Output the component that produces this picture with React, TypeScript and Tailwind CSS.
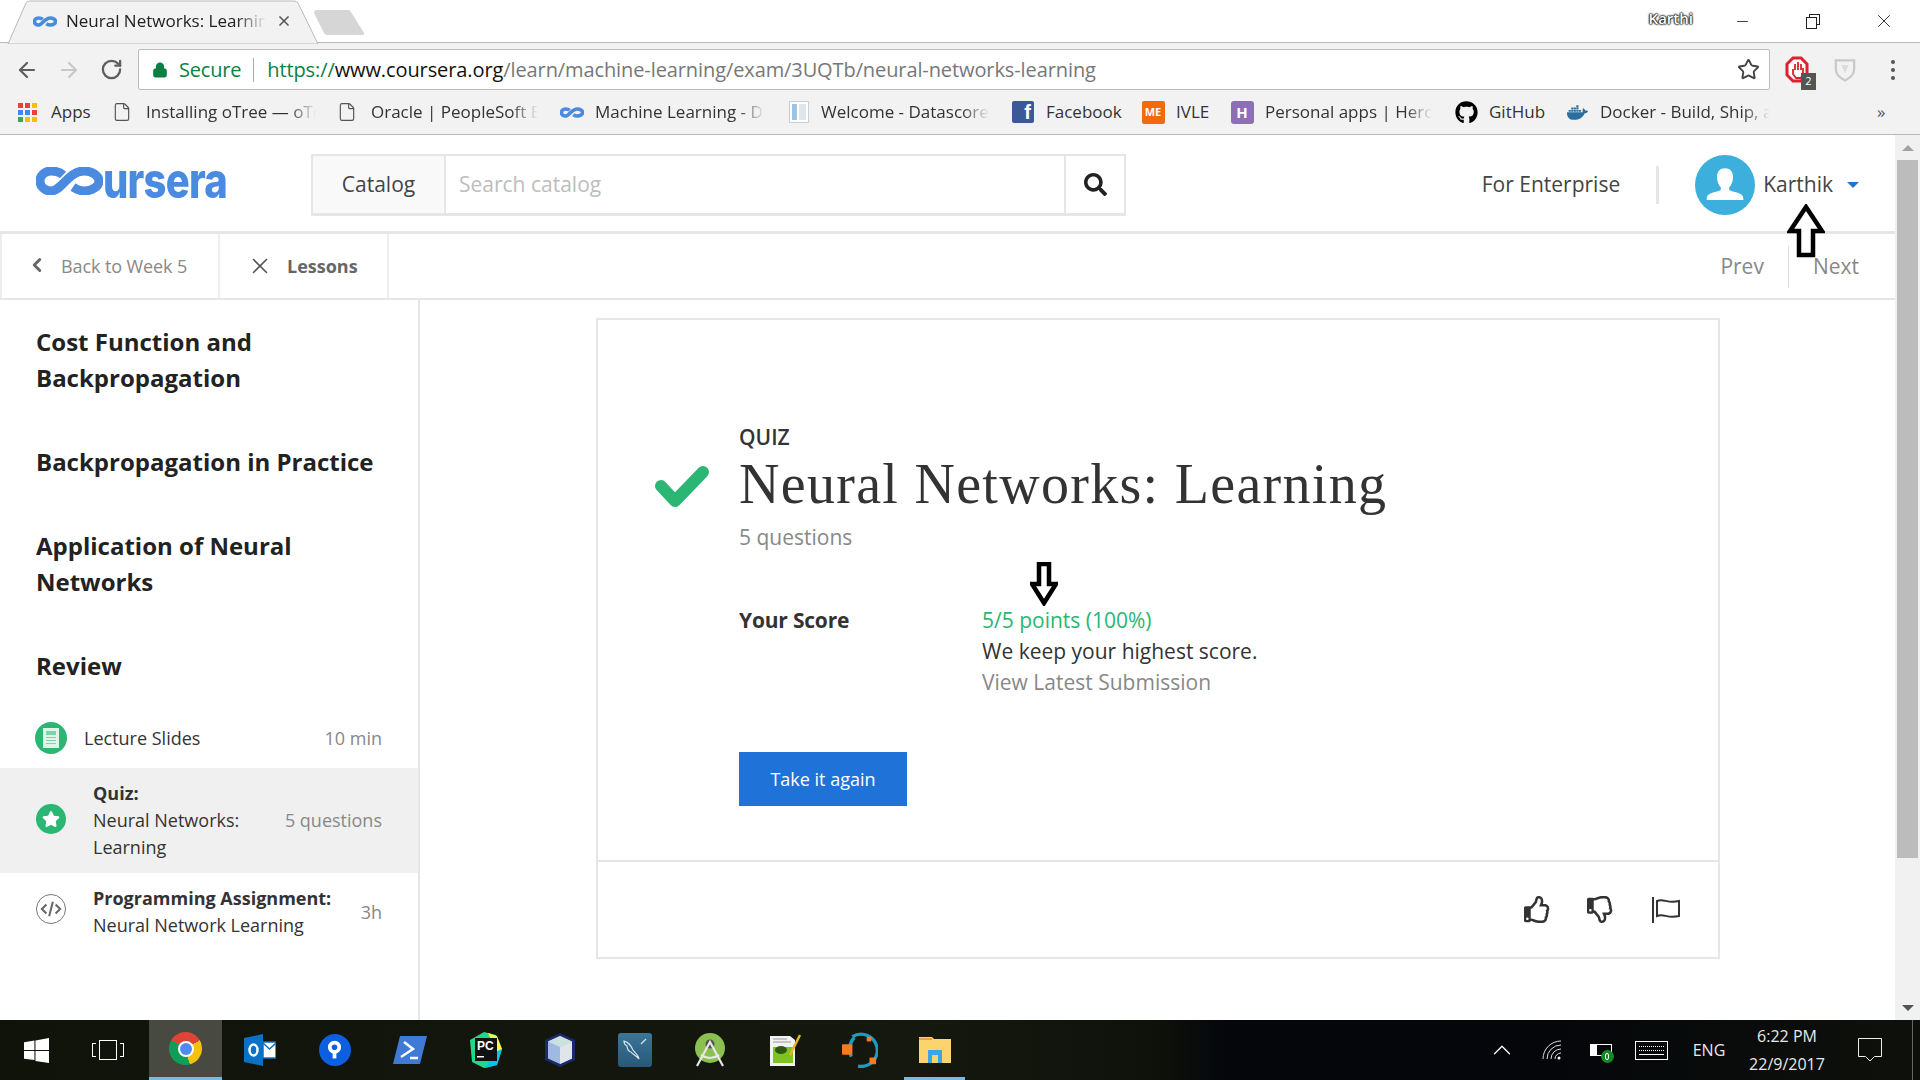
import type { ReactNode } from "react";
import { ArrowLeft, ArrowRight, ChevronLeft, ChevronUp, File, Lock, Minus, RotateCw, Star, X } from "lucide-react";
import { FaDocker, FaGithub, FaRegThumbsDown, FaRegThumbsUp, FaSearch, FaStar } from "react-icons/fa";

function Infinity8({ className, stroke = 9 }: { className: string; stroke?: number }) {
  return (
    <svg viewBox="0 0 67 28" className={className} fill="none" stroke="#4a8ae0" strokeWidth={stroke}>
      <path d="M27 8C24 5 20 4 15 4 8.500 4 4 8.500 4 14s4.500 10 11 10C26 24 32 4 48 4c8 0 15 4.500 15 10s-7 10-15 10c-5 0-8-2-11-4" />
    </svg>
  );
}

function Bookmark({ w, icon, label, fade = true, gap = "gap-[11px]" }: { w: string; icon: ReactNode; label: string; fade?: boolean; gap?: string }) {
  return (
    <div className={`flex items-center ${gap} ${w}`}>
      <div className="flex h-[24px] w-[24px] shrink-0 items-center justify-center">{icon}</div>
      <span
        className={`overflow-hidden whitespace-nowrap text-[17px] text-[#333] ${
          fade ? "mr-[22px] min-w-0 flex-1 [mask-image:linear-gradient(to_right,black_84%,transparent_100%)]" : ""
        }`}
      >
        {label}
      </span>
    </div>
  );
}

function AppsGrid() {
  const colors = ["#ea4335", "#ea4335", "#fbbc05", "#4285f4", "#4285f4", "#ea4335", "#34a853", "#fbbc05", "#fbbc05"];
  return (
    <div className="grid grid-cols-3 gap-[2px]">
      {colors.map((c, i) => (
        <div key={i} className="h-[5px] w-[5px]" style={{ backgroundColor: c }} />
      ))}
    </div>
  );
}

function BrowserChrome() {
  return (
    <div className="flex h-[135px] shrink-0 flex-col border-b border-[#b9b9b9] bg-[#f2f2f2]">
      <div className="relative flex h-[43px] items-center border-b border-[#b9b9b9] bg-white">
        <svg className="absolute left-0 top-0 h-[44px] w-[380px]" viewBox="0 0 380 44">
          <path d="M8 44 L26 3 Q27 1 30 1 L294 1 Q297 1 298 3 L318 44 Z" fill="#f2f2f2" stroke="#b9b9b9" />
          <path d="M314 13 Q314 10 317 10 L348 10 Q350 10 351 12 L364 33 Q365 35 362 35 L327 35 Q325 35 324 33 Z" fill="#d6d6d6" />
        </svg>
        <div className="relative ml-[33px] flex items-center">
          <Infinity8 className="h-[13px] w-[24px]" stroke={10} />
          <span className="ml-[9px] w-[200px] overflow-hidden whitespace-nowrap text-[17px] text-[#222] [mask-image:linear-gradient(to_right,black_85%,transparent)]">
            Neural Networks: Learning
          </span>
          <X size={16} strokeWidth={2.5} className="ml-[10px] text-[#555]" />
        </div>
        <div className="relative ml-auto flex items-center">
          <span className="mb-[5px] mr-[41px] text-[15px] font-semibold text-white [text-shadow:0_0_2px_#111,0_0_2px_#111,0_0_2px_#111,0_0_1px_#111]">Karthi</span>
          <Minus size={17} strokeWidth={1.2} className="mr-[55px] text-[#222]" />
          <div className="relative mr-[53px] h-[15px] w-[14px]">
            <div className="absolute right-0 top-0 h-[11px] w-[11px] border border-[#222]" />
            <div className="absolute bottom-0 left-0 h-[12px] w-[11px] border border-[#222] bg-white" />
          </div>
          <X size={22} strokeWidth={1} className="mr-[25px] text-[#222]" />
        </div>
      </div>

      <div className="flex h-[49px] items-start pt-[6px]">
        <div className="ml-[6px] flex">
          <div className="flex h-[41px] w-[42px] items-center justify-center text-[#5f5f5f]"><ArrowLeft size={24} strokeWidth={2.2} /></div>
          <div className="flex h-[41px] w-[42px] items-center justify-center text-[#c8c8c8]"><ArrowRight size={24} strokeWidth={2.2} /></div>
          <div className="flex h-[41px] w-[42px] items-center justify-center text-[#5f5f5f]"><RotateCw size={23} strokeWidth={2.4} /></div>
        </div>
        <div className="ml-[6px] flex h-[41px] w-[1632px] items-center rounded-[2px] border border-[#bdbdbd] bg-white pl-[13px] pr-[9px] text-[20px]">
          <Lock size={16} strokeWidth={2.5} className="fill-[#0b8043] text-[#0b8043]" />
          <span className="ml-[11px] tracking-[-0.2px] text-[#0b8043]">Secure</span>
          <div className="ml-[12px] h-[24px] w-px bg-[#aaa]" />
          <span className="ml-[13px] whitespace-nowrap tracking-[-0.1px] text-[#777]">
            <span className="text-[#0b8043]">https://</span>
            <span className="text-[#111]">www.coursera.org</span>
            /learn/machine-learning/exam/3UQTb/neural-networks-learning
          </span>
          <Star size={23} strokeWidth={2} className="ml-auto text-[#444]" />
        </div>
        <div className="ml-[3px] flex">
          <div className="relative flex h-[41px] w-[48px] items-center justify-center">
            <svg viewBox="0 0 24 28" className="h-[28px] w-[24px]">
              <path d="M8 2h8l6 6v11l-6 6H8l-6-6V8z" fill="#fff" stroke="#e0202c" strokeWidth="3" />
              <path d="M8 13v5l3 4h5l2-5v-5M10 14V8m3 6V6m3 8V8" fill="none" stroke="#e0202c" strokeWidth="1.800" />
            </svg>
            <span className="absolute left-[28px] top-[24px] flex h-[17px] w-[15px] items-center justify-center bg-[#555] text-[11px] text-white">2</span>
          </div>
          <div className="flex h-[41px] w-[48px] items-center justify-center">
            <svg viewBox="0 0 24 28" className="h-[27px] w-[22px]" fill="none" stroke="#c9c9c9" strokeWidth="2.500">
              <path d="M2 4h20v10c0 6-5 9-10 12C7 23 2 20 2 14z" />
              <path d="M8 9h8l-4 9z" fill="#dcdcdc" stroke="none" />
            </svg>
          </div>
          <div className="flex h-[41px] w-[48px] flex-col items-center justify-center gap-[4px]">
            <div className="h-[4px] w-[4px] rounded-full bg-[#555]" />
            <div className="h-[4px] w-[4px] rounded-full bg-[#555]" />
            <div className="h-[4px] w-[4px] rounded-full bg-[#555]" />
          </div>
        </div>
      </div>

      <div className="flex flex-1 items-center pb-[2px] pl-[15px]">
        <Bookmark w="w-[98px]" gap="gap-[12px]" icon={<AppsGrid />} label="Apps" fade={false} />
        <Bookmark w="w-[225px]" gap="gap-[9px]" icon={<File size={20} strokeWidth={1.4} className="-translate-x-[3px] text-[#555]" />} label="Installing oTree — oTree" />
        <Bookmark w="w-[222px]" gap="gap-[9px]" icon={<File size={20} strokeWidth={1.4} className="-translate-x-[3px] text-[#555]" />} label="Oracle | PeopleSoft Enterprise" />
        <Bookmark w="w-[227px]" icon={<Infinity8 className="h-[13px] w-[24px]" stroke={10} />} label="Machine Learning - Deep" />
        <Bookmark
          w="w-[224px]"
          gap="gap-[10px]"
          icon={
            <div className="flex h-[22px] w-[20px] gap-[2px] border border-[#c5d2de] bg-white p-[2px]">
              <div className="w-[5px] bg-[#9fc3e2]" />
              <div className="flex-1 bg-[#dfe6ec]" />
            </div>
          }
          label="Welcome - Datascore Hub"
        />
        <Bookmark
          w="w-[130px]"
          icon={<div className="flex h-[22px] w-[22px] items-end justify-end rounded-[2px] bg-[#3b5998] pr-[3px] font-['Liberation_Sans',sans-serif] text-[20px] font-bold leading-[22px] text-white">f</div>}
          label="Facebook"
          fade={false}
        />
        <Bookmark
          w="w-[89px]"
          icon={<div className="flex h-[23px] w-[23px] items-center justify-center rounded-[2px] bg-[#f26a0f] text-[11px] font-bold text-white">ME</div>}
          label="IVLE"
          fade={false}
        />
        <Bookmark
          w="w-[224px]"
          icon={<div className="flex h-[23px] w-[23px] items-center justify-center rounded-[3px] bg-[#8c6fb5] text-[15px] font-bold text-white">H</div>}
          label="Personal apps | Heroku"
        />
        <Bookmark w="w-[111px]" icon={<FaGithub size={23} className="text-black" />} label="GitHub" fade={false} />
        <Bookmark w="w-[227px]" icon={<FaDocker size={21} className="text-[#2a6f9f]" />} label="Docker - Build, Ship, and Run" />
        <span className="ml-[85px] text-[17px] text-[#555]">»</span>
      </div>
    </div>
  );
}

function TopNav() {
  return (
    <div className="flex h-[99px] shrink-0 items-center border-b-[3px] border-[#e6e6e6] bg-white pt-[4px]">
      <div className="flex w-[311px] shrink-0 items-center pb-[8px] pl-[36px]">
        <Infinity8 className="h-[28px] w-[67px]" />
        <span className="inline-block origin-center scale-y-[1.22] font-['Inter',sans-serif] text-[40px] font-extrabold leading-none tracking-[-0.8px] text-[#4a8ae0]">
          ursera
        </span>
      </div>
      <div className="flex h-[62px] w-[815px] border-2 border-b-[3px] border-[#e6e6e6]">
        <div className="flex w-[133px] items-center justify-center border-r-2 border-[#e6e6e6] bg-[#f9f9f9] text-[21px] text-[#444]">Catalog</div>
        <div className="flex flex-1 items-center pl-[13px] text-[21px] text-[#bdbdbd]">Search catalog</div>
        <div className="flex w-[60px] items-center justify-center border-l-2 border-[#e6e6e6] text-[#222]">
          <FaSearch size={23} />
        </div>
      </div>
      <div className="ml-auto flex items-center pr-[36px]">
        <span className="text-[21px] text-[#444]">For Enterprise</span>
        <div className="mx-[36px] h-[38px] w-[3px] bg-[#e6e6e6]" />
        <div className="flex h-[60px] w-[60px] items-end justify-center overflow-hidden rounded-full bg-[#3cafdc]">
          <svg viewBox="0 0 36 36" className="h-[60px] w-[60px]" fill="#fff">
            <path d="M18 8c-3 0-4.800 2-4.800 5 0 3 1 5 2.300 6.500v1.500c-1.500 1-7 1.500-8 3.500-.6 1.300-.5 2-.5 2.500h22c0-.5.100-1.200-.5-2.500-1-2-6.500-2.500-8-3.500v-1.500c1.300-1.500 2.300-3.500 2.300-6.500 0-3-1.800-5-4.800-5z" />
          </svg>
        </div>
        <span className="ml-[8px] text-[21px] text-[#444]">Karthik</span>
        <div className="ml-[14px] h-0 w-0 border-x-[6px] border-t-[6px] border-x-transparent border-t-[#2a73cc]" />
      </div>
    </div>
  );
}

function SubNav() {
  return (
    <div className="flex h-[66px] shrink-0 items-stretch border-b-2 border-[#e6e6e6] bg-white">
      <div className="flex w-[220px] items-center border-x-2 border-[#eee] pl-[24px] text-[18px] text-[#888]">
        <ChevronLeft size={22} strokeWidth={3.2} className="-translate-y-[1px] text-[#666]" />
        <span className="ml-[13px] tracking-[-0.1px]">Back to Week 5</span>
      </div>
      <div className="flex w-[169px] items-center border-r-2 border-[#eee] pl-[27px]">
        <X size={26} strokeWidth={1.5} className="text-[#555]" />
        <span className="ml-[14px] text-[18px] font-bold text-[#666]">Lessons</span>
      </div>
      <div className="ml-auto flex items-center pr-[36px] pt-[1px] text-[21px] text-[#888]">
        <span>Prev</span>
        <div className="mx-[24px] h-[42px] w-px bg-[#ddd]" />
        <span>Next</span>
      </div>
    </div>
  );
}

function Sidebar() {
  return (
    <div className="flex w-[420px] shrink-0 flex-col border-r-2 border-[#e6e6e6] bg-white pt-[24px]">
      <div className="flex flex-col gap-[48px] px-[36px] text-[24px] font-bold leading-[36px] text-[#222]">
        <div>Cost Function and<br />Backpropagation</div>
        <div>Backpropagation in Practice</div>
        <div>Application of Neural<br />Networks</div>
        <div>Review</div>
      </div>
      <div className="mt-[24px] flex h-[60px] items-center pl-[35px] pr-[36px] text-[18px] text-[#333]">
        <div className="flex h-[32px] w-[32px] items-center justify-center rounded-full bg-[#2bb673]">
          <div className="flex h-[20px] w-[16px] flex-col gap-[2px] bg-[#dff5e9] p-[3px]">
            <div className="h-[4px] bg-[#7fd3a8]" />
            <div className="h-[1px] bg-[#7fd3a8]" />
            <div className="h-[1px] bg-[#7fd3a8]" />
            <div className="h-[1px] bg-[#7fd3a8]" />
          </div>
        </div>
        <span className="ml-[17px]">Lecture Slides</span>
        <span className="ml-auto text-[#888]">10 min</span>
      </div>
      <div className="flex h-[105px] items-center bg-[#f0f0f0] pl-[36px] pr-[36px] text-[18px] leading-[27px] text-[#333]">
        <div className="mb-[4px] flex h-[30px] w-[30px] shrink-0 items-center justify-center rounded-full bg-[#2bb673] text-white">
          <FaStar size={18} />
        </div>
        <div className="ml-[27px] w-[170px]">
          <div className="font-bold">Quiz:</div>
          <div>Neural Networks: Learning</div>
        </div>
        <span className="ml-auto whitespace-nowrap text-[#888]">5 questions</span>
      </div>
      <div className="flex items-center pl-[36px] pr-[36px] pt-[12px] text-[18px] leading-[27px] text-[#333]">
        <div className="mb-[6px] flex h-[30px] w-[30px] shrink-0 items-center justify-center rounded-full border border-[#777]">
          <svg viewBox="0 0 24 24" className="h-[22px] w-[22px]" fill="none" stroke="#666" strokeWidth="2.200">
            <path d="M7 7l-5 5 5 5M17 7l5 5-5 5M14 4l-4 16" />
          </svg>
        </div>
        <div className="ml-[27px]">
          <div className="whitespace-nowrap font-bold">Programming Assignment:</div>
          <div className="whitespace-nowrap">Neural Network Learning</div>
        </div>
        <span className="ml-auto text-[#888]">3h</span>
      </div>
    </div>
  );
}

function QuizCard() {
  return (
    <div className="ml-[176px] mt-[18px] flex h-[641px] w-[1124px] flex-col border-2 border-[#e6e6e6]">
      <div className="flex h-[542px] border-b-2 border-[#e6e6e6] pl-[56px] pt-[103px]">
        <div className="w-[85px] shrink-0 pt-[42px]">
          <svg viewBox="0 0 56 44" className="h-[44px] w-[56px]" fill="none" stroke="#2bb673" strokeWidth="12" strokeLinejoin="round" strokeLinecap="round">
            <path d="M7 21l14 15L49 7" />
          </svg>
        </div>
        <div className="flex flex-col">
          <div className="text-[21px] font-semibold leading-[28px] text-[#333]">QUIZ</div>
          <div className="mt-[1px] whitespace-nowrap font-['Liberation_Serif',serif] text-[56px] leading-[64px] tracking-[1.300px] text-[#333]">Neural Networks: Learning</div>
          <div className="mt-[7px] text-[21px] leading-[28px] text-[#888]">5 questions</div>
          <div className="mt-[54px] flex text-[21px] leading-[31px]">
            <div className="w-[243px] font-bold tracking-[-0.2px] text-[#333]">Your Score</div>
            <div>
              <div className="text-[#2bb673]">5/5 points (100%)</div>
              <div className="text-[#333]">We keep your highest score.</div>
              <div className="text-[#888]">View Latest Submission</div>
            </div>
          </div>
          <button className="mt-[54px] flex h-[54px] w-[168px] items-center justify-center bg-[#1f72d8] text-[18px] text-white">Take it again</button>
        </div>
      </div>
      <div className="flex flex-1 items-center justify-end pr-[37px] text-[#333]">
        <FaRegThumbsUp size={27} />
        <FaRegThumbsDown size={27} className="ml-[36px]" />
        <svg viewBox="0 0 30 26" className="ml-[37px] h-[26px] w-[30px]" fill="none" stroke="#333" strokeWidth="2">
          <path d="M2 0v26" />
          <path d="M6 4c7-3 10 3 22 0v15c-12 3-15-3-22 0z" />
        </svg>
      </div>
    </div>
  );
}

function Scrollbar() {
  return (
    <div className="flex w-[25px] shrink-0 flex-col items-center bg-[#f1f1f1]">
      <div className="mt-[10px] h-0 w-0 border-x-[6px] border-b-[6px] border-x-transparent border-b-[#a3a3a3]" />
      <div className="mt-[9px] h-[698px] w-[21px] bg-[#bcbcbc]" />
      <div className="mt-auto mb-[9px] h-0 w-0 border-x-[6px] border-t-[6px] border-x-transparent border-t-[#555]" />
    </div>
  );
}

function TaskCell({ className = "w-[75px]", children }: { className?: string; children: ReactNode }) {
  return <div className={`flex h-full items-center justify-center ${className}`}>{children}</div>;
}

function Taskbar() {
  return (
    <div className="flex h-[60px] shrink-0 bg-[linear-gradient(to_right,#0f130a_0%,#14180e_48%,#0f120a_60%,#04060c_64%,#04060a_80%,#0e110b_100%)] text-white">
      <TaskCell className="w-[72px]">
        <svg viewBox="0 0 24 24" className="h-[25px] w-[25px]" fill="#fff">
          <path d="M0 4l10-1.500v9H0zM11 2.300L24 0v11.500H11zM0 12.500h10V21L0 19.800zM11 12.500h13V24l-13-2z" />
        </svg>
      </TaskCell>
      <TaskCell className="w-[77px] pr-[5px]">
        <div className="flex items-center gap-[3px]">
          <div className="h-[14px] w-[4px] border-y border-l border-white" />
          <div className="h-[20px] w-[18px] border border-white" />
          <div className="h-[14px] w-[4px] border-y border-r border-white" />
        </div>
      </TaskCell>
      <div className="flex h-full w-[73px] items-center justify-center border-b-[3px] border-[#76b9ed] bg-[#484a42]">
        <div className="flex h-[33px] w-[33px] items-center justify-center rounded-full bg-[conic-gradient(from_300deg,#db4437_0_120deg,#f4c20d_120deg_225deg,#0f9d58_225deg_360deg)]">
          <div className="flex h-[16px] w-[16px] items-center justify-center rounded-full bg-white">
            <div className="h-[12px] w-[12px] rounded-full bg-[#4c8bf5]" />
          </div>
        </div>
      </div>
      <TaskCell>
        <svg viewBox="0 0 32 32" className="h-[32px] w-[32px]">
          <path d="M19 0v32L0 28V4z" fill="#0a72c6" />
          <rect x="19" y="8" width="13" height="16" fill="#fff" stroke="#0a72c6" strokeWidth="1.500" />
          <path d="M19 9l6.500 6L32 9" fill="none" stroke="#0a72c6" strokeWidth="1.500" />
          <ellipse cx="9.500" cy="16" rx="4" ry="5.500" fill="none" stroke="#fff" strokeWidth="2.500" />
        </svg>
      </TaskCell>
      <TaskCell>
        <div className="flex h-[32px] w-[32px] items-center justify-center rounded-full bg-[#0b5fe0]">
          <svg viewBox="0 0 16 20" className="h-[20px] w-[15px]" fill="none" stroke="#fff" strokeWidth="4">
            <circle cx="8" cy="7" r="5" />
            <path d="M8 12v7" />
          </svg>
        </div>
      </TaskCell>
      <TaskCell>
        <svg viewBox="0 0 34 28" className="h-[28px] w-[34px]">
          <path d="M7 0h27l-7 28H0z" fill="#3f7ad6" />
          <path d="M11 6l9 7-12 8M17 22h8" fill="none" stroke="#fff" strokeWidth="2.500" />
        </svg>
      </TaskCell>
      <TaskCell>
        <svg viewBox="0 0 34 36" className="h-[36px] w-[34px]">
          <path d="M2 8L16 0l12 3 6 14-5 16-13 3-12-6z" fill="#21d789" />
          <path d="M20 1l9 3 5 13-4 6z" fill="#fcf84a" />
          <path d="M27 20l7-3-5 16-12 3z" fill="#07c3f2" />
          <rect x="7" y="6" width="22" height="23" fill="#111" />
          <text x="9" y="18" fontSize="12" fontWeight="700" fill="#fff" fontFamily="Liberation Sans">PC</text>
          <rect x="9" y="24" width="7" height="1.500" fill="#fff" />
        </svg>
      </TaskCell>
      <TaskCell>
        <svg viewBox="0 0 34 36" className="h-[36px] w-[34px]">
          <path d="M17 1l15 7v20l-15 7-15-7V8z" fill="#1c2a6b" />
          <path d="M17 4L29 9.500v17L17 32 5 26.500v-17z" fill="#9fb9e0" />
          <path d="M5 9.500L17 4l12 5.500L17 15z" fill="#c9e2e0" />
          <path d="M17 15l12-5.500v17L17 32z" fill="#dfe5ea" />
        </svg>
      </TaskCell>
      <TaskCell>
        <div className="flex h-[34px] w-[34px] items-center justify-center rounded-[3px] bg-[linear-gradient(#3b7699,#28587a)]">
          <svg viewBox="0 0 28 28" className="h-[28px] w-[28px]" fill="none" stroke="#dbe6ee" strokeWidth="1.200">
            <path d="M3 5c5 1 7 5 9 9 2 3 5 4 6 9-3-4-6-4-8-7-2 0-4-3-4-6-2-1-3-3-3-5zM20 8l5-5" />
          </svg>
        </div>
      </TaskCell>
      <TaskCell>
        <svg viewBox="0 0 32 34" className="h-[34px] w-[32px]">
          <circle cx="16" cy="15" r="15" fill="#8cc152" />
          <circle cx="16" cy="11" r="4.500" fill="#555" />
          <path d="M3 33L16 9l13 24M7 22q9 6 18 0" fill="none" stroke="#e8e8e8" strokeWidth="2.200" />
        </svg>
      </TaskCell>
      <TaskCell>
        <svg viewBox="0 0 34 34" className="h-[34px] w-[34px]">
          <path d="M2 3h20l5 4v26H2z" fill="#f2f2f2" />
          <rect x="5" y="14" width="20" height="16" fill="#7ec41f" />
          <ellipse cx="13" cy="17" rx="6" ry="4" fill="#2c5a12" />
          <path d="M5 6h14M5 9h18" stroke="#999" strokeWidth="1" />
          <path d="M22 22L32 2" stroke="#e8b32a" strokeWidth="2.500" />
        </svg>
      </TaskCell>
      <TaskCell>
        <svg viewBox="0 0 38 38" className="h-[36px] w-[36px]">
          <path d="M11 5a17 17 0 1 1 6 31" fill="none" stroke="#1d9bc4" strokeWidth="3.500" />
          <path d="M10 26a17 17 0 0 1 3-20" fill="none" stroke="#1d9bc4" strokeWidth="3.500" />
          <rect x="0" y="13" width="11" height="11" rx="1" fill="#f47b20" />
          <rect x="26" y="5" width="5" height="5" rx="1" fill="#f47b20" />
          <rect x="29" y="27" width="7" height="7" rx="1" fill="#f47b20" />
        </svg>
      </TaskCell>
      <div className="flex h-full w-[75px] items-center justify-center">
        <div className="relative flex h-full w-[61px] items-center justify-center border-b-[3px] border-[#76b9ed]">
          <svg viewBox="0 0 32 28" className="h-[28px] w-[32px]">
            <path d="M0 2h13l2 2h17v24H0z" fill="#fbd46d" />
            <path d="M0 4h13" stroke="#e8a33d" strokeWidth="2" />
            <path d="M9 28V15h14v13h-4v-8h-6v8z" fill="#3aa6e8" />
          </svg>
        </div>
      </div>

      <div className="ml-auto flex h-full items-center">
        <TaskCell className="w-[50px]"><ChevronUp size={30} strokeWidth={1} /></TaskCell>
        <TaskCell className="w-[49px]">
          <svg viewBox="0 0 20 20" className="h-[20px] w-[20px]" fill="none" stroke="#ddd" strokeWidth="1">
            <path d="M1 19A18 18 0 0 1 19 1M5 19A14 14 0 0 1 19 5M9 19a10 10 0 0 1 10-10M13 19a6 6 0 0 1 6-6" />
            <circle cx="17" cy="18" r="1.500" fill="#fff" stroke="none" />
          </svg>
        </TaskCell>
        <TaskCell className="w-[49px]">
          <div className="relative h-[12px] w-[22px] border border-white">
            <div className="h-full w-[6px] bg-white" />
            <div className="absolute -bottom-[8px] left-[10px] flex h-[13px] w-[13px] items-center justify-center rounded-full bg-[#128a23]">
              <div className="h-[7px] w-[4px] rounded-full border border-white" />
            </div>
          </div>
        </TaskCell>
        <TaskCell className="w-[52px]">
          <div className="flex h-[19px] w-[33px] flex-col justify-center gap-[3px] border border-white px-[3px]">
            <div className="h-px border-t border-dotted border-white" />
            <div className="h-px border-t border-dotted border-white" />
            <div className="h-px border-t border-white" />
          </div>
        </TaskCell>
        <TaskCell className="w-[64px]"><span className="text-[16px] text-[#e8e8e8]">ENG</span></TaskCell>
        <TaskCell className="w-[92px]">
          <div className="flex flex-col items-center whitespace-nowrap text-[16px] leading-[28px] text-[#e8e8e8]">
            <span>6:22 PM</span>
            <span>22/9/2017</span>
          </div>
        </TaskCell>
        <TaskCell className="w-[74px]">
          <svg viewBox="0 0 24 24" className="h-[24px] w-[24px]" fill="none" stroke="#eee" strokeWidth="1">
            <path d="M0.500 0.500h23v18h-7l-4.500 4.500-4.500-4.500h-7z" />
          </svg>
        </TaskCell>
        <div className="flex h-full w-[13px] justify-center pr-[2px]">
          <div className="h-full w-px bg-[#666]" />
        </div>
      </div>
    </div>
  );
}

export default function App() {
  return (
    <div className="relative flex h-[1080px] w-[1920px] flex-col overflow-hidden bg-white font-['Open_Sans',sans-serif]">
      <BrowserChrome />
      <div className="flex min-h-0 flex-1">
        <div className="flex min-w-0 flex-1 flex-col">
          <TopNav />
          <SubNav />
          <div className="flex min-h-0 flex-1">
            <Sidebar />
            <QuizCard />
          </div>
        </div>
        <Scrollbar />
      </div>
      <Taskbar />

      {/* hand-drawn arrows someone added on top of the screenshot */}
      <svg viewBox="0 0 38 54" className="absolute left-[1787px] top-[204px] h-[54px] w-[38px]" fill="#fff" stroke="#000" strokeWidth="4.500">
        <path d="M19 3L35 27H26V51H12V27H3z" />
      </svg>
      <svg viewBox="0 0 28 44" className="absolute left-[1030px] top-[562px] h-[44px] w-[28px]" fill="#fff" stroke="#000" strokeWidth="4.500">
        <path d="M9 2H19V22H26L14 41 2 22H9z" />
      </svg>
    </div>
  );
}
